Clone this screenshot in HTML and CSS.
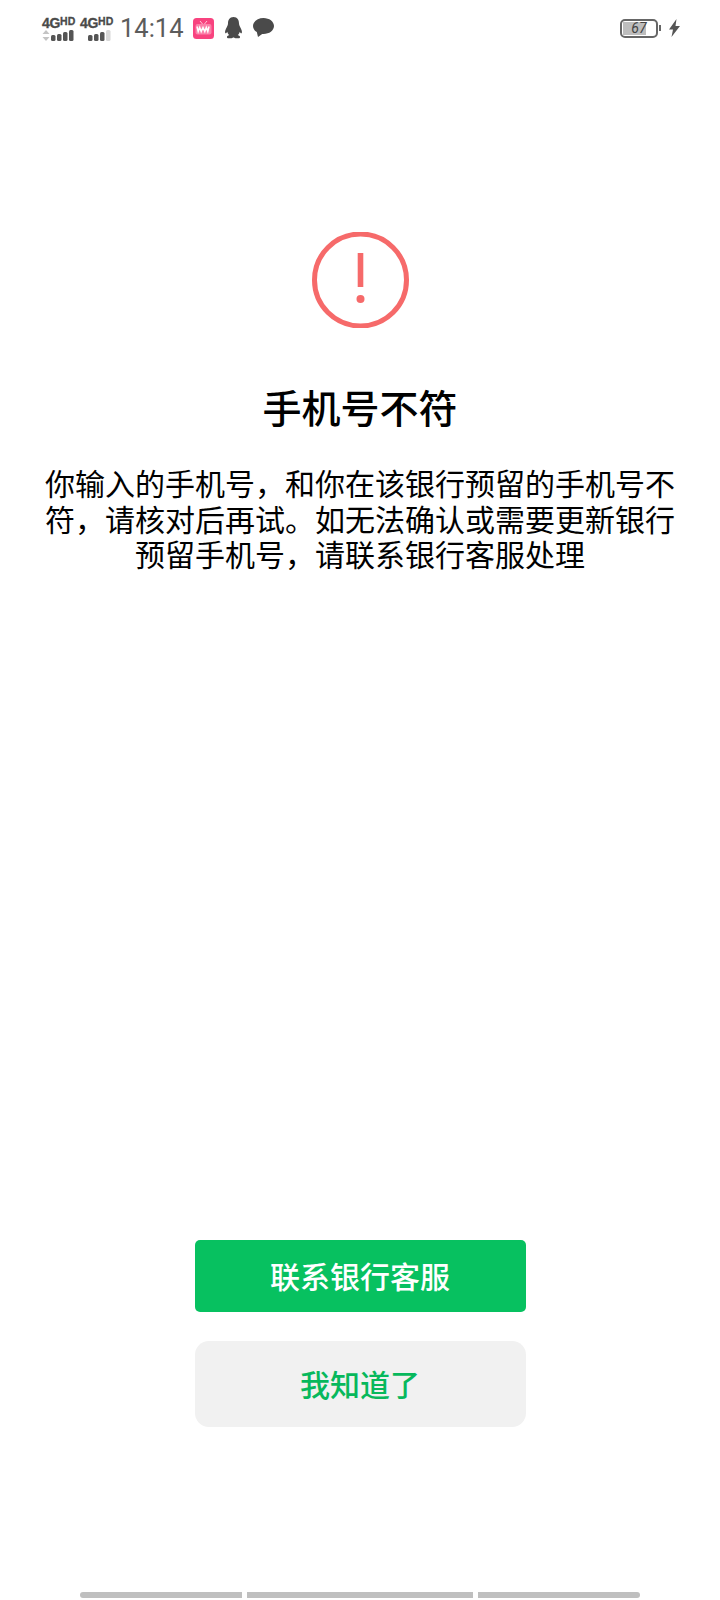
FILE: index.html
```html
<!DOCTYPE html>
<html lang="zh-CN">
<head>
<meta charset="utf-8">
<title>手机号不符</title>
<link rel="stylesheet" href="styles.css">
</head>
<body>
<div class="page">
  <header class="status">
    <div class="status-left">
      <div class="net">
        <div class="net-label">4G<span class="hd">HD</span></div>
        <svg class="net-bars" width="34" height="11" viewBox="0 0 34 11"><path d="M4 0 7.500 4H.5zM4 11 .5 7h7z" fill="#c4c4c4"/><g fill="#555"><rect x="9" y="5" width="4.500" height="6" rx="1.500"/><rect x="15" y="4" width="4.500" height="7" rx="1.500"/><rect x="21" y="2" width="4.500" height="9" rx="1.500"/><rect x="27" y="0" width="4.500" height="11" rx="1.500"/></g></svg>
      </div>
      <div class="net">
        <div class="net-label">4G<span class="hd">HD</span></div>
        <svg class="net-bars" width="34" height="11" viewBox="0 0 34 11"><g fill="#555"><rect x="8" y="5" width="4.500" height="6" rx="1.500"/><rect x="14" y="4" width="4.500" height="7" rx="1.500"/><rect x="20" y="2" width="4.500" height="9" rx="1.500"/></g><rect x="26" y="0" width="4.500" height="11" rx="1.500" fill="#d8d8d8"/></svg>
      </div>
      <span class="time">14:14</span>
      <svg class="app" width="21" height="21" viewBox="0 0 21 21"><rect width="21" height="21" rx="3.500" fill="#f8437f"/><path d="M7 3 9.500 6M14 3 11.500 6" stroke="#ffc4d8" stroke-width="1"/><rect x="2.500" y="6" width="16" height="10.500" rx="2" fill="#fb80a9"/><path d="M4 8.500l1.200 5 1.500-4 1.500 4 1.800-4 1.800 4 1.500-4 1.500 4 1.200-5" fill="none" stroke="#fff" stroke-width="1.500"/></svg>
      <svg class="qq" width="19" height="22" viewBox="0 0 19 22"><path d="M9.500 0C5.500 0 4 3 4 6.500c0 1-.3 2-1 3.200C1.500 12.500.5 15 1.300 16.200c.5.600 1.400-.5 2-1.500.2 1.300.9 2.500 2 3.400-1.500.5-2.600 1.200-2.300 2.300.3 1.100 3 1.100 4.600.8 1-.2 1.300-.7 1.900-.7s.9.500 1.900.7c1.600.3 4.300.3 4.600-.8.300-1.100-.8-1.800-2.300-2.300 1.100-.9 1.800-2.100 2-3.400.6 1 1.500 2.100 2 1.500.8-1.200-.2-3.700-1.700-6.500-.7-1.200-1-2.200-1-3.200C15 3 13.500 0 9.500 0z" fill="#4a4a4a"/></svg>
      <svg class="chat" width="21" height="20" viewBox="0 0 21 20"><path d="M10.500 0C4.700 0 0 3.600 0 8c0 2.500 1.500 4.700 3.800 6.100L5 19l4.200-3.100c.4 0 .9.100 1.300.1C16.300 16 21 12.400 21 8s-4.700-8-10.500-8z" fill="#4a4a4a"/></svg>
    </div>
    <div class="status-right">
      <div class="battery"><div class="battery-fill"></div><span class="battery-num">67</span></div>
      <div class="battery-tip"></div>
      <svg class="bolt" width="11" height="18" viewBox="0 0 11 18"><path d="M7.500 0 0 10.500h4L2.500 18 11 7H6.500z" fill="#555"/></svg>
    </div>
  </header>

  <main class="content">
    <svg class="warn" width="97" height="96" viewBox="0 0 97 96">
      <circle cx="48.500" cy="48" r="46" fill="none" stroke="#f66a6a" stroke-width="5"/>
      <rect x="45.700" y="21" width="5.600" height="34" fill="#f66a6a"/>
      <circle cx="48.500" cy="67" r="4" fill="#f66a6a"/>
    </svg>
    <h1 class="title">手机号不符</h1>
    <p class="desc">你输入的手机号，和你在该银行预留的手机号不符，请核对后再试。如无法确认或需要更新银行预留手机号，请联系银行客服处理</p>
  </main>

  <div class="actions">
    <button class="btn btn-primary">联系银行客服</button>
    <button class="btn btn-secondary">我知道了</button>
  </div>

  <footer class="home">
    <span class="seg seg-a"></span>
    <span class="seg seg-b"></span>
    <span class="seg seg-c"></span>
  </footer>
</div>
</body>
</html>
```
FILE: styles.css
```css
* { box-sizing: border-box; }
html, body { margin: 0; padding: 0; background: #fff; }
.page {
  width: 720px;
  height: 1600px;
  display: flex;
  flex-direction: column;
  font-family: "Noto Sans CJK SC", "Noto Sans", sans-serif;
  overflow: hidden;
}
.status {
  height: 56px;
  padding: 0 40px 0 42px;
  display: flex;
  justify-content: space-between;
  align-items: center;
  color: #4a4a4a;
}
.status-left, .status-right { display: flex; align-items: center; }
.net { width: 38px; display: flex; flex-direction: column; }
.net-label { font: 700 14px/13px "Liberation Sans", sans-serif; letter-spacing: -0.3px; white-space: nowrap; -webkit-text-stroke: 0.3px #4a4a4a; }
.hd { font-size: 10.500px; letter-spacing: 0; vertical-align: 3px; }
.net-bars { display: block; margin-top: 0; }
.time { font: 400 25.500px/28px Roboto, sans-serif; margin: 0 9px 0 2px; color: #5c5c5c; }
.app { margin-right: 10px; }
.qq { margin-right: 10px; }
.battery {
  position: relative;
  width: 38px;
  height: 19px;
  border: 2px solid #666;
  border-radius: 5px;
  overflow: hidden;
  padding: 1px;
  display: flex;
}
.battery-fill { width: 23px; background: #bdbdbd; }
.battery-num {
  position: absolute;
  left: 0;
  right: 0;
  top: 0;
  text-align: center;
  font: italic 400 14px/15px Roboto, sans-serif;
  color: #444;
}
.battery-tip { width: 2px; height: 6px; background: #666; margin: 0 8px 0 1px; }
.content {
  display: flex;
  flex-direction: column;
  align-items: center;
  padding: 176px 42px 0;
}
.warn { display: block; }
.title {
  margin: 50px 0 0;
  font-size: 39px;
  line-height: 56px;
  font-weight: 500;
  color: #000;
}
.desc {
  margin: 31px 0 0;
  font-size: 30px;
  line-height: 35.500px;
  text-align: center;
  color: #000;
}
.actions {
  margin-top: auto;
  display: flex;
  flex-direction: column;
  align-items: center;
  gap: 29px;
}
.btn {
  width: 331px;
  border: 0;
  padding: 0 0 2px;
  font-family: inherit;
  font-size: 30px;
  font-weight: 500;
}
.btn-primary { height: 72px; background: #07c160; color: #fff; border-radius: 5px; }
.btn-secondary { height: 86px; background: #f1f1f1; color: #07b85c; border-radius: 14px; }
.home {
  margin-top: 165px;
  height: 6px;
  margin-bottom: 2px;
  display: flex;
  gap: 5px;
  justify-content: center;
}
.seg { height: 6px; background: #bfbfbf; }
.seg-a { width: 162px; border-radius: 3px 0 0 3px; }
.seg-b { width: 226px; }
.seg-c { width: 162px; border-radius: 0 3px 3px 0; }
```
